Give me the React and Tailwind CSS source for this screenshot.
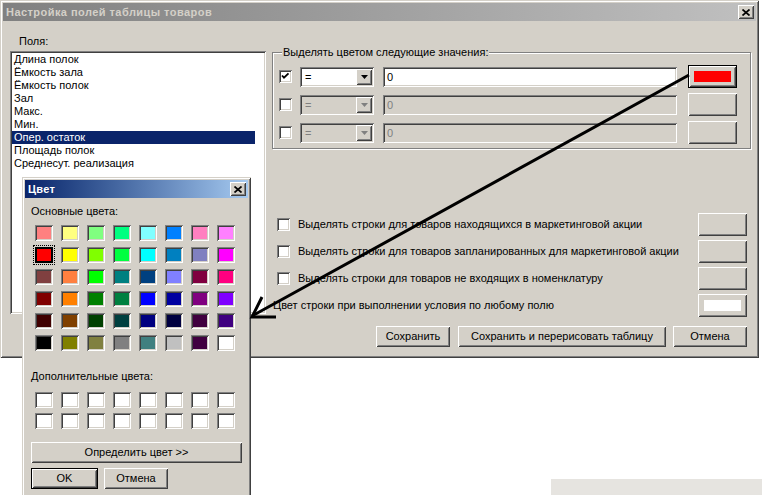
import React from 'react';

const raised = 'shadow-[inset_1px_1px_#ffffff,inset_-1px_-1px_#404040,inset_2px_2px_#d4d0c8,inset_-2px_-2px_#808080]';
const sunken = 'shadow-[inset_1px_1px_#808080,inset_-1px_-1px_#ffffff,inset_2px_2px_#404040,inset_-2px_-2px_#d4d0c8]';
const frame = 'shadow-[inset_1px_1px_#d4d0c8,inset_-1px_-1px_#404040,inset_2px_2px_#ffffff,inset_-2px_-2px_#808080]';

const fields = [
  'Длина полок',
  'Ёмкость зала',
  'Ёмкость полок',
  'Зал',
  'Макс.',
  'Мин.',
  'Опер. остаток',
  'Площадь полок',
  'Среднесут. реализация',
];

const basic = [
  ['#ff8080', '#ffff80', '#80ff80', '#00ff80', '#80ffff', '#0080ff', '#ff80c0', '#ff80ff'],
  ['#ff0000', '#ffff00', '#80ff00', '#00ff40', '#00ffff', '#0080c0', '#8080c0', '#ff00ff'],
  ['#804040', '#ff8040', '#00ff00', '#008080', '#004080', '#8080ff', '#800040', '#ff0080'],
  ['#800000', '#ff8000', '#008000', '#008040', '#0000ff', '#0000a0', '#800080', '#8000ff'],
  ['#400000', '#804000', '#004000', '#004040', '#000080', '#000040', '#400040', '#400080'],
  ['#000000', '#808000', '#808040', '#808080', '#408080', '#c0c0c0', '#400040', '#ffffff'],
];

function CloseBtn() {
  return (
    <div className={`w-[16px] h-[14px] bg-[#d4d0c8] flex items-center justify-center ${raised}`}>
      <svg width="8" height="7" viewBox="0 0 8 7">
        <path d="M0.5 0.5L7.5 6.5M7.5 0.5L0.5 6.5" stroke="#000" strokeWidth="1.7" />
      </svg>
    </div>
  );
}

function Checkbox({ checked }) {
  return (
    <div className={`w-[13px] h-[13px] bg-white ${sunken}`}>
      {checked && (
        <svg width="13" height="13" viewBox="0 0 13 13">
          <path d="M3 5.5L5 7.7L9.5 3.3" stroke="#000" strokeWidth="1.8" fill="none" />
        </svg>
      )}
    </div>
  );
}

function Combo({ disabled }) {
  return (
    <div className={`flex h-[20px] w-[74px] p-[2px] ${sunken} ${disabled ? 'bg-[#d4d0c8] text-[#808080]' : 'bg-white text-black'}`}>
      <span className="flex-1 pl-[3px] leading-[16px]">=</span>
      <div className={`w-[16px] h-[16px] bg-[#d4d0c8] flex items-center justify-center ${raised}`}>
        <svg width="7" height="4" viewBox="0 0 7 4">
          <path d="M0 0H7L3.5 4Z" fill={disabled ? '#808080' : '#000'} />
        </svg>
      </div>
    </div>
  );
}

function Field({ disabled }) {
  return (
    <div className={`h-[20px] w-[294px] pl-[4px] leading-[20px] ${sunken} ${disabled ? 'bg-[#d4d0c8] text-[#808080]' : 'bg-white text-black'}`}>
      0
    </div>
  );
}

function ColorBtn({ fill, def }) {
  return (
    <div className={`w-[49px] h-[23px] bg-[#d4d0c8] flex items-center justify-center ${raised} ${def ? 'border border-black' : ''}`}>
      {fill && <div className={`w-[37px] h-[11px] ${fill}`} />}
    </div>
  );
}

function Btn({ w, children, def }) {
  return (
    <div className={`h-[21px] ${w} bg-[#d4d0c8] flex items-center justify-center ${raised} ${def ? 'border border-black' : ''}`}>
      {children}
    </div>
  );
}

function Swatch({ color, selected }) {
  if (selected) {
    return (
      <div className="w-[18px] h-[16px] border-2 border-black outline outline-1 outline-dotted outline-black outline-offset-[1px]" style={{ background: color }} />
    );
  }
  return (
    <div className={`w-[18px] h-[16px] p-[2px] ${sunken}`}>
      <div className="w-full h-full" style={{ background: color }} />
    </div>
  );
}

function ColorDialog() {
  return (
    <div className={`absolute left-[22px] top-[177px] w-[229px] h-[330px] bg-[#d4d0c8] p-[3px] ${frame}`}>
      <div className="h-[18px] flex items-center bg-linear-to-r from-[#0a246a] to-[#a6caf0] pl-[3px] pr-[2px]">
        <span className="text-white font-bold text-[11px] tracking-[0.3px]">Цвет</span>
        <div className="ml-auto"><CloseBtn /></div>
      </div>
      <div className="mt-[7px] pl-[6px] leading-[13px]">Основные цвета:</div>
      <div className="mt-[7px] ml-[10px] grid grid-cols-[repeat(8,18px)] gap-x-[8px] gap-y-[6px]">
        {basic.map((row, r) =>
          row.map((c, i) => <Swatch key={`${r}-${i}`} color={c} selected={r === 1 && i === 0} />)
        )}
      </div>
      <div className="mt-[19px] pl-[6px] leading-[13px]">Дополнительные цвета:</div>
      <div className="mt-[9px] ml-[10px] grid grid-cols-[repeat(8,18px)] gap-x-[8px] gap-y-[5px]">
        {Array.from({ length: 16 }).map((_, i) => <Swatch key={i} color="#ffffff" />)}
      </div>
      <div className="mt-[13px] ml-[6px]">
        <Btn w="w-[211px]">Определить цвет &gt;&gt;</Btn>
      </div>
      <div className="mt-[5px] ml-[6px] flex gap-[6px]">
        <div className={`h-[21px] w-[67px] border border-black bg-[#d4d0c8] flex items-center justify-center ${raised}`}>OK</div>
        <Btn w="w-[64px]">Отмена</Btn>
      </div>
    </div>
  );
}

export default function App() {
  return (
    <div className="relative w-[762px] h-[495px] overflow-hidden bg-white text-[11px] text-black font-['Liberation_Sans',Arial,sans-serif]">
      <div className={`w-[759px] h-[358px] bg-[#d4d0c8] p-[3px] ${frame}`}>
        <div className="h-[18px] flex items-center bg-linear-to-r from-[#808080] to-[#c0c0c0] pl-[3px] pr-[2px]">
          <span className="text-[#d4d0c8] font-bold text-[11px] tracking-[0.45px]">Настройка полей таблицы товаров</span>
          <div className="ml-auto"><CloseBtn /></div>
        </div>

        <div className="flex">
          <div className="ml-[7px] w-[256px]">
            <div className="mt-[14px] pl-[9px] leading-[13px]">Поля:</div>
            <div className={`mt-[3px] h-[263px] bg-white p-[2px] ${sunken}`}>
              {fields.map((f) => (
                <div
                  key={f}
                  className={`mr-[9px] pl-[2px] leading-[13px] whitespace-nowrap ${f === 'Опер. остаток' ? 'bg-[#0a246a] text-white' : ''}`}
                >
                  {f}
                </div>
              ))}
            </div>
          </div>

          <div className="ml-[6px] w-[479px]">
            <div className="mt-[31px] h-[97px] border border-[#808080] shadow-[inset_1px_1px_#ffffff,1px_1px_#ffffff]">
              <div className="-mt-[7px] ml-[9px] px-[1px] w-fit bg-[#d4d0c8] leading-[13px]">
                Выделять цветом следующие значения:
              </div>
              <div className="mt-[6px] flex flex-col gap-[5px]">
                {[0, 1, 2].map((i) => (
                  <div key={i} className="flex items-center h-[23px]">
                    <div className="ml-[6px]"><Checkbox checked={i === 0} /></div>
                    <div className="ml-[8px]"><Combo disabled={i > 0} /></div>
                    <div className="ml-[9px]"><Field disabled={i > 0} /></div>
                    <div className="ml-[11px]"><ColorBtn def={i === 0} fill={i === 0 ? 'bg-[#ff0000]' : null} /></div>
                  </div>
                ))}
              </div>
            </div>

            <div className="mt-[64px] flex flex-col gap-[4px]">
              {[
                'Выделять строки для товаров находящихся в маркетинговой акции',
                'Выделять строки для товаров запланированных для маркетинговой акции',
                'Выделять строки для товаров не входящих в номенклатуру',
              ].map((t) => (
                <div key={t} className="flex items-center h-[23px] mr-[4px]">
                  <div className="ml-[5px]"><Checkbox /></div>
                  <span className="ml-[8px] flex-1">{t}</span>
                  <ColorBtn />
                </div>
              ))}
              <div className="flex items-center h-[23px] mr-[4px]">
                <span className="ml-[1px] flex-1">Цвет строки при выполнении условия по любому полю</span>
                <ColorBtn fill="bg-white h-[10px]" />
              </div>
            </div>

            <div className="mt-[9px] mr-[4px] flex justify-end">
              <Btn w="w-[74px]">Сохранить</Btn>
              <div className="ml-[8px]"><Btn w="w-[208px]">Сохранить и перерисовать таблицу</Btn></div>
              <div className="ml-[7px]"><Btn w="w-[74px]">Отмена</Btn></div>
            </div>
          </div>
        </div>
      </div>

      <div className="mt-[121px] ml-[551px] w-[211px] h-[16px] bg-[#e6e4e0]" />

      <ColorDialog />

      <svg className="absolute left-0 top-0 pointer-events-none" width="762" height="495" viewBox="0 0 762 495">
        <path d="M689 75L252 316" stroke="#000" strokeWidth="3" fill="none" />
        <path d="M262 297L252 317L276 317" stroke="#000" strokeWidth="3" fill="none" />
      </svg>
    </div>
  );
}
